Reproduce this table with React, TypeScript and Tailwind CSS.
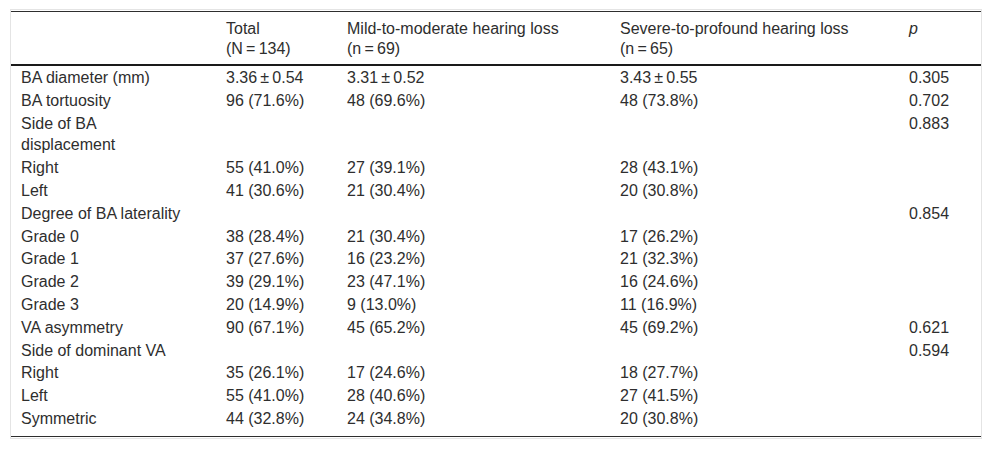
const ROWS: [string, string, string, string, string][] = [
  ["BA diameter (mm)", "3.36\u2009±\u20090.54", "3.31\u2009±\u20090.52", "3.43\u2009±\u20090.55", "0.305"],
  ["BA tortuosity", "96 (71.6%)", "48 (69.6%)", "48 (73.8%)", "0.702"],
  ["Side of BA displacement", "", "", "", "0.883"],
  ["Right", "55 (41.0%)", "27 (39.1%)", "28 (43.1%)", ""],
  ["Left", "41 (30.6%)", "21 (30.4%)", "20 (30.8%)", ""],
  ["Degree of BA laterality", "", "", "", "0.854"],
  ["Grade 0", "38 (28.4%)", "21 (30.4%)", "17 (26.2%)", ""],
  ["Grade 1", "37 (27.6%)", "16 (23.2%)", "21 (32.3%)", ""],
  ["Grade 2", "39 (29.1%)", "23 (47.1%)", "16 (24.6%)", ""],
  ["Grade 3", "20 (14.9%)", "9 (13.0%)", "11 (16.9%)", ""],
  ["VA asymmetry", "90 (67.1%)", "45 (65.2%)", "45 (69.2%)", "0.621"],
  ["Side of dominant VA", "", "", "", "0.594"],
  ["Right", "35 (26.1%)", "17 (24.6%)", "18 (27.7%)", ""],
  ["Left", "55 (41.0%)", "28 (40.6%)", "27 (41.5%)", ""],
  ["Symmetric", "44 (32.8%)", "24 (34.8%)", "20 (30.8%)", ""],
]

export default function App() {
  return (
    <div className="bg-white w-[992px] h-[449px] pt-[9px] pl-[10px] font-['Liberation_Sans',Arial,sans-serif] text-[16px] text-[#2e2e2e]">
      <div className="w-[972px] border border-[#e4e4e4] pt-[1px] pb-[1px]">
        <table className="table-fixed border-collapse w-[970px]">
          <colgroup>
            <col className="w-[205px]" />
            <col className="w-[121px]" />
            <col className="w-[273px]" />
            <col className="w-[289px]" />
            <col className="w-[82px]" />
          </colgroup>
          <thead>
            <tr className="border-t border-[#2e2e2e] border-b-2 border-b-[#1a1a1a] align-top leading-[20px]">
              <th className="pl-[10px] pt-[7px] pb-[5px] text-left font-normal"></th>
              <th className="pl-[10px] pt-[7px] pb-[5px] text-left font-normal">
                Total
                <br />
                (N{"\u2009"}={"\u2009"}134)
              </th>
              <th className="pl-[10px] pt-[7px] pb-[5px] text-left font-normal">
                Mild-to-moderate hearing loss
                <br />
                (n{"\u2009"}={"\u2009"}69)
              </th>
              <th className="pl-[10px] pt-[7px] pb-[5px] text-left font-normal">
                Severe-to-profound hearing loss
                <br />
                (n{"\u2009"}={"\u2009"}65)
              </th>
              <th className="pl-[10px] pt-[7px] pb-[5px] text-left font-normal italic">p</th>
            </tr>
          </thead>
          <tbody className="border-b border-[#2e2e2e]">
            {ROWS.map((row, i) => {
              const last = i === ROWS.length - 1
              const cell = last ? "pl-[10px] pt-[1.1px] pb-[6px]" : "pl-[10px] pt-[1.1px]"
              return (
                <tr key={i} className="align-top leading-[21.7px]">
                  <td className={cell}>
                    {row[0] === "Side of BA displacement" ? (
                      <>
                        Side of BA
                        <br />
                        displacement
                      </>
                    ) : (
                      row[0]
                    )}
                  </td>
                  <td className={cell}>{row[1]}</td>
                  <td className={cell}>{row[2]}</td>
                  <td className={cell}>{row[3]}</td>
                  <td className={cell}>{row[4]}</td>
                </tr>
              )
            })}
          </tbody>
        </table>
      </div>
    </div>
  )
}
